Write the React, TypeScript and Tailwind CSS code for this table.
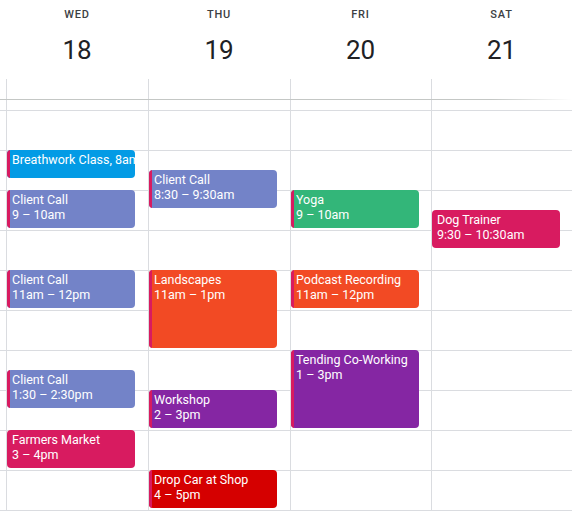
import * as React from 'react'

type CalEvent = {
  title: string
  time?: string
  start: number // hours, 24h
  end: number
  color: string
  accent?: boolean
}

const days: { label: string; date: number; events: CalEvent[] }[] = [
  {
    label: 'WED',
    date: 18,
    events: [
      { title: 'Breathwork Class, 8am', start: 8, end: 8.75, color: 'bg-[#039be5]', accent: true },
      { title: 'Client Call', time: '9 – 10am', start: 9, end: 10, color: 'bg-[#7383c8]', accent: true },
      { title: 'Client Call', time: '11am – 12pm', start: 11, end: 12, color: 'bg-[#7383c8]', accent: true },
      { title: 'Client Call', time: '1:30 – 2:30pm', start: 13.5, end: 14.5, color: 'bg-[#7383c8]', accent: true },
      { title: 'Farmers Market', time: '3 – 4pm', start: 15, end: 16, color: 'bg-[#d81b60]' },
    ],
  },
  {
    label: 'THU',
    date: 19,
    events: [
      { title: 'Client Call', time: '8:30 – 9:30am', start: 8.5, end: 9.5, color: 'bg-[#7383c8]', accent: true },
      { title: 'Landscapes', time: '11am – 1pm', start: 11, end: 13, color: 'bg-[#f24a24]', accent: true },
      { title: 'Workshop', time: '2 – 3pm', start: 14, end: 15, color: 'bg-[#8526a3]', accent: true },
      { title: 'Drop Car at Shop', time: '4 – 5pm', start: 16, end: 17, color: 'bg-[#d50000]', accent: true },
    ],
  },
  {
    label: 'FRI',
    date: 20,
    events: [
      { title: 'Yoga', time: '9 – 10am', start: 9, end: 10, color: 'bg-[#33b679]', accent: true },
      { title: 'Podcast Recording', time: '11am – 12pm', start: 11, end: 12, color: 'bg-[#f24a24]', accent: true },
      { title: 'Tending Co-Working', time: '1 – 3pm', start: 13, end: 15, color: 'bg-[#8526a3]', accent: true },
    ],
  },
  {
    label: 'SAT',
    date: 21,
    events: [
      { title: 'Dog Trainer', time: '9:30 – 10:30am', start: 9.5, end: 10.5, color: 'bg-[#d81b60]' },
    ],
  },
]

// 8am line sits 50px below the top of the time grid, 40px per hour
const HOUR = 40
const gridTop = (h: number) => 50 + (h - 8) * HOUR

const widths = ['w-[142px]', 'w-[142px]', 'w-[141px]', 'w-[141px]']

const EventChip = ({ ev }: { ev: CalEvent }) => {
  const top = gridTop(ev.start)
  const height = (ev.end - ev.start) * HOUR - 2
  return (
    <div
      className={`absolute left-0 w-[128px] rounded-[4px] overflow-hidden text-white ${ev.color}`}
      style={{ top, height }}
    >
      {ev.accent && <div className="absolute left-0 top-0 bottom-0 w-[3px] bg-[#d81b60]" />}
      <div className="pl-[5px] pt-[2px] text-[12.5px] leading-[15px]">
        <div className="whitespace-nowrap overflow-hidden">{ev.title}</div>
        {ev.time && <div className="whitespace-nowrap">{ev.time}</div>}
      </div>
    </div>
  )
}

export default function App() {
  return (
    <div className="w-[572px] h-[516px] overflow-hidden bg-white text-[#3c4043] font-['Roboto',_'Liberation_Sans',_sans-serif]">
      {/* day headings */}
      <div className="flex h-[79px]">
        <div className="w-[6px] shrink-0" />
        {days.map((d, i) => (
          <div key={d.label} className={`${widths[i]} shrink-0 flex flex-col items-center`}>
            <div className="mt-[7px] text-[11px] font-medium tracking-[0.8px] text-[#3c4043]">{d.label}</div>
            <div className="mt-[11px] text-[26px] leading-[30px] text-[#202124]">{d.date}</div>
          </div>
        ))}
      </div>

      {/* all-day strip */}
      <div className="flex h-[20px]">
        <div className="w-[6px] shrink-0" />
        {days.map((d, i) => (
          <div key={d.label} className={`${widths[i]} shrink-0 border-l border-[#dadce0]`} />
        ))}
      </div>
      <div className="h-[1px] bg-[linear-gradient(to_right,#c4c7c5_0%,#c4c7c5_86%,rgba(196,199,197,0)_100%)]" />

      {/* time grid */}
      <div className="relative">
        <div className="h-[11px] border-b border-[#dadce0]" />
        {Array.from({ length: 10 }).map((_, i) => (
          <div key={i} className="h-[40px] border-b border-[#dadce0]" />
        ))}
        <div className="absolute inset-0 flex">
          <div className="w-[6px] shrink-0" />
          {days.map((d, i) => (
            <div key={d.label} className={`${widths[i]} shrink-0 border-l border-[#dadce0] relative`}>
              {d.events.map((ev, j) => (
                <EventChip key={j} ev={ev} />
              ))}
            </div>
          ))}
        </div>
      </div>
    </div>
  )
}
